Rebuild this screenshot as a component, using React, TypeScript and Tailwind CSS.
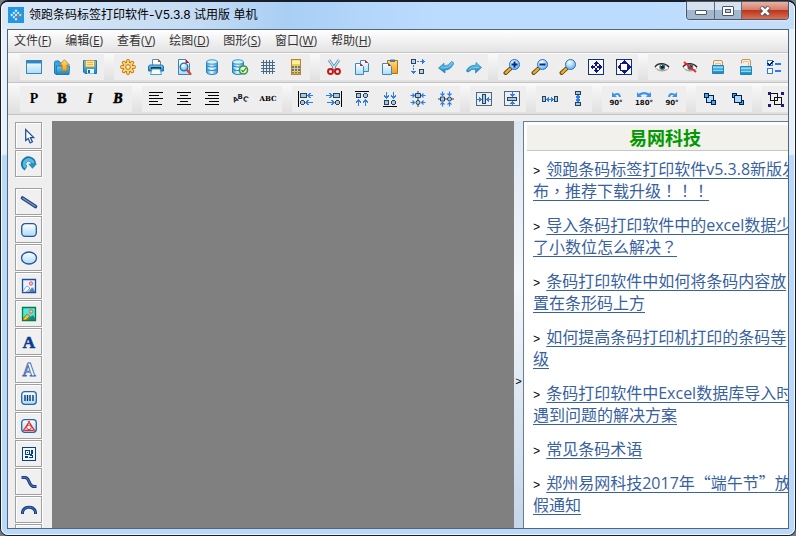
import React, { Fragment, ReactNode } from "react";

const SANS = "font-['Open_Sans','Noto_Sans_CJK_SC',sans-serif]";

function Icon({ children, crisp = false }: { children: ReactNode; crisp?: boolean }) {
  return (
    <svg
      viewBox="0 0 16 16"
      className="block h-4 w-4 shrink-0 overflow-visible"
      fill="none"
      shapeRendering={crisp ? "crispEdges" : "auto"}
      aria-hidden="true"
    >
      {children}
    </svg>
  );
}

/* ---------- shared icon parts ---------- */

function Defs() {
  return (
    <svg className="absolute h-0 w-0" aria-hidden="true">
      <defs>
        <linearGradient id="sky" x1="0" y1="0" x2="0" y2="1">
          <stop offset="0" stopColor="#ffffff" />
          <stop offset="1" stopColor="#a8dcf8" />
        </linearGradient>
        <linearGradient id="blue" x1="0" y1="0" x2="0" y2="1">
          <stop offset="0" stopColor="#6fcdf3" />
          <stop offset="1" stopColor="#1583c4" />
        </linearGradient>
        <linearGradient id="gold" x1="0" y1="0" x2="0" y2="1">
          <stop offset="0" stopColor="#ffdf73" />
          <stop offset="1" stopColor="#ee9a1c" />
        </linearGradient>
        <linearGradient id="db" x1="0" y1="0" x2="1" y2="0">
          <stop offset="0" stopColor="#2b9bd8" />
          <stop offset="0.45" stopColor="#e4f7ff" />
          <stop offset="1" stopColor="#2b8fce" />
        </linearGradient>
        <radialGradient id="lens" cx="0.4" cy="0.3" r="0.8">
          <stop offset="0" stopColor="#ffffff" />
          <stop offset="1" stopColor="#4aa9ee" />
        </radialGradient>
      </defs>
    </svg>
  );
}

function Database() {
  return (
    <>
      <path d="M2.500 3v10c0 3.300 11 3.300 11 0V3z" fill="url(#db)" stroke="#2382bd" />
      <ellipse cx="8" cy="3" rx="5.500" ry="2.200" fill="#d3f2ff" stroke="#3398d0" />
      <path d="M3 6.500c1 2 9 2 10 0M3 10c1 2 9 2 10 0" stroke="#2382bd" />
      <path d="M4 8.600c2 1.200 6 1.200 8 0" stroke="#fff" strokeWidth=".8" />
    </>
  );
}

function Lens({ children }: { children?: ReactNode }) {
  return (
    <>
      <path d="M6.500 9.500 1.500 14" stroke="#5b3d06" strokeWidth="4" strokeLinecap="round" />
      <path d="M6 10 1.800 13.800" stroke="#e9ad2b" strokeWidth="2.400" strokeLinecap="round" />
      <circle cx="10.500" cy="5.500" r="5" fill="url(#lens)" stroke="#2a72bd" />
      {children}
    </>
  );
}

function Eye() {
  return (
    <>
      <path d="M1 8.500C4 4 11 4 15 9c-3 3.300-10 3.500-14-.5z" fill="#fff" stroke="#888" strokeWidth=".7" />
      <path d="M1 7.800C4 3.500 11 3.500 15 8" stroke="#33251e" strokeWidth="1.300" />
      <circle cx="8.300" cy="8" r="3" fill="#3f7284" />
      <circle cx="8.300" cy="8" r="1.600" fill="#061821" />
      <path d="M6.800 6h1v1h-1z" fill="#fff" />
      <path d="M3 10.500c3 2 7 2 10 0" stroke="#b58c7e" strokeWidth=".8" />
    </>
  );
}

function Padlock({ open = false }: { open?: boolean }) {
  return open ? (
    <>
      <path d="M3.500 4.500V2Q3.500.500 5 .500h6q1.500 0 1.500 1.500v5.500" stroke="#d39343" />
      <path d="M5.500 4V2.500h5v4.500" stroke="#e8c08a" />
      <path d="M2.500 7.500h11v8h-11z" fill="url(#blue)" stroke="#2681b5" />
      <path d="M3 9.500h10M3 12.500h10" stroke="#8bdcf5" />
    </>
  ) : (
    <>
      <path d="M3.500 6.500V3Q3.500 1.500 5 1.500h6q1.500 0 1.500 1.500v3.500" stroke="#d39343" />
      <path d="M5.500 6.500V4.500h5v2" stroke="#e8c08a" />
      <path d="M2.500 6.500h11v8h-11z" fill="url(#blue)" stroke="#2681b5" />
      <path d="M3 8.500h10M3 11.500h10" stroke="#8bdcf5" />
    </>
  );
}

const shape = { fill: "#a9c7dd", stroke: "#26415c" };

function Arrow({ d }: { d: string }) {
  return <path d={d} stroke="#2b7df0" strokeWidth="1.100" />;
}

function Picture({ color }: { color: boolean }) {
  return (
    <>
      <path d="M1.500 1.500h13v13h-13z" fill={color ? "#49ecd9" : "#e6f3ff"} stroke={color ? "#087a43" : "#1d4da0"} strokeWidth="1.300" />
      <path d="M2 12l4-4 4 3 2-2 2 3v2H2z" fill={color ? "#2a9b58" : "#a9c4de"} />
      <path d="M2 13 6 8l3 2-4 4H2z" fill={color ? "#f0c22b" : "#fff"} stroke={color ? "#776a21" : "#5c83b7"} strokeWidth=".6" />
      <path d="M8 14 11 9.500l3 4v.5z" fill={color ? "#24798d" : "#537eae"} />
      <circle cx="10" cy="5.500" r="1.700" fill="#ffc4c4" stroke="#ee5260" />
    </>
  );
}

function TurnLabel({ text }: { text: string }) {
  return (
    <text x="8" y="14" textAnchor="middle" fontSize="7" fontWeight="700" fontFamily="DejaVu Sans, sans-serif" fill="#111">
      {text}
    </text>
  );
}

function SerifLetter({ text, italic = false }: { text: string; italic?: boolean }) {
  return (
    <text
      x="8"
      y="12"
      textAnchor="middle"
      fontSize="14"
      fontWeight="700"
      fontStyle={italic ? "italic" : "normal"}
      fontFamily="Liberation Serif, serif"
      fill="#000"
    >
      {text}
    </text>
  );
}

type Tool = [label: string, icon: ReactNode];

/* ---------- first toolbar ---------- */

const mainTools: Tool[][] = [
  [
    ["新建", <Icon crisp><path d="M.5 1.500h15v13H.5z" fill="url(#sky)" stroke="#3c86b5" /><path d="M1 2h14v2H1z" fill="#2c86c8" /><path d="M1 4h14v1H1z" fill="#90c8ec" /></Icon>],
    ["打开", <Icon><path d="M.5 3.500Q.5 2 2 2h3l1 2h6v11H2Q.5 15 .5 14z" fill="#3da5dc" stroke="#1c7db5" /><path d="M2.500 7h13L15 15.500H2z" fill="url(#blue)" stroke="#1c7db5" /><path d="M10.500.700 15.500 6H13v6H8V6H5.500z" fill="url(#gold)" stroke="#b26f10" strokeWidth=".7" /></Icon>],
    ["保存", <Icon><path d="M1.500 1.500h13v13H3l-1.500-1.500z" fill="url(#blue)" stroke="#1d79b2" /><path d="M3.500 1.500h9V8h-9z" fill="#ffe9a6" stroke="#d89931" /><path d="M5 3.500h6M5 5.500h6" stroke="#eeb54b" /><path d="M5 10h7v4.500H5z" fill="#e8f8ff" /><path d="M6 11h2v3H6z" fill="#17699d" /></Icon>],
  ],
  [
    ["设置", <Icon><path d="M8 2v12M2 8h12M3.700 3.700l8.600 8.600M12.300 3.700l-8.600 8.600" stroke="#c67a15" strokeWidth="3.800" strokeLinecap="round" /><circle cx="8" cy="8" r="5" fill="#ffcd61" stroke="#c67a15" strokeWidth="1.400" /><path d="M8 2v12M2 8h12M3.700 3.700l8.600 8.600M12.300 3.700l-8.600 8.600" stroke="#ffd376" strokeWidth="2" strokeLinecap="round" /><circle cx="8" cy="8" r="4.200" fill="#ffd376" /><circle cx="8" cy="8" r="2.300" fill="#f3f1e8" stroke="#b86e13" /></Icon>],
    ["打印", <Icon><path d="M4.500 6V.500h6l2 2V6" fill="#fff" stroke="#5194bb" /><path d="M10 0l3 3h-3z" fill="#bd4943" /><path d="M.5 8Q.5 6 2.500 6h11q2 0 2 2v4H.5z" fill="url(#blue)" stroke="#246eaa" /><path d="M3 8h10v2H3z" fill="#19384d" /><path d="M4 10h8l1.500 5.500h-11z" fill="#f5fcff" stroke="#4c9dc8" /></Icon>],
    ["打印预览", <Icon><path d="M2.500.500h7l4 4v11h-11z" fill="url(#sky)" stroke="#3684b8" /><path d="M9.500 0l4 4h-4z" fill="#c62020" /><circle cx="8" cy="8" r="3.800" fill="url(#lens)" stroke="#226fae" strokeWidth="1.300" /><path d="m11 11 3.500 4" stroke="#dd3f22" strokeWidth="2.200" strokeLinecap="round" /></Icon>],
    ["数据库", <Icon><Database /></Icon>],
    ["数据库连接", <Icon><g transform="translate(-2 0)"><Database /></g><circle cx="11.500" cy="11" r="4" fill="#eaffdf" stroke="#3d9841" strokeWidth="1.600" /><path d="m9.500 11 1.500 1.800 3-3.600" stroke="#2b9034" strokeWidth="1.300" /></Icon>],
    ["网格", <Icon crisp><path d="M3.500 1v14M6.500 1v14M9.500 1v14M12.500 1v14M1 3.500h14M1 6.500h14M1 9.500h14M1 12.500h14" stroke="#426a8a" /></Icon>],
    ["计算器", <Icon crisp><path d="M3.500.500h9v15h-9z" fill="url(#gold)" stroke="#b98432" /><path d="M4 2h8v3H4z" fill="#fff2a1" /><path d="M4 7h8v7H4z" fill="#4282a3" /><path d="M6.500 7v7M9.500 7v7M4 9.500h8M4 12h8" stroke="#f0c56a" /></Icon>],
  ],
  [
    ["剪切", <Icon><path d="m3 1 7 10M13 1 6 11" stroke="#4a87a8" strokeWidth="2.600" /><path d="m3 1 7 10M13 1 6 11" stroke="#d9f1fb" strokeWidth="1.200" /><circle cx="4.500" cy="12.500" r="2.500" stroke="#c91613" strokeWidth="1.900" /><circle cx="11.500" cy="12.500" r="2.500" stroke="#c91613" strokeWidth="1.900" /></Icon>],
    ["复制", <Icon><path d="M6.500 1.500h5l3 3v8h-8z" fill="url(#sky)" stroke="#4189b8" /><path d="M11 1l3 3h-3z" fill="#c52828" /><path d="M1.500 4.500h5l3 3v8h-8z" fill="url(#sky)" stroke="#4189b8" /><path d="M6 4l3 3H6z" fill="#c52828" /></Icon>],
    ["粘贴", <Icon><path d="M5.500 1.500h10v13h-10z" fill="url(#gold)" stroke="#ae711c" /><path d="M8 .500h5V3H8z" fill="#497da0" /><path d="M.5 4.500h6l3 3v8h-9z" fill="url(#sky)" stroke="#4189b8" /><path d="M6 4l3 3H6z" fill="#c52828" /></Icon>],
    ["连接", <Icon crisp><path d="M1.500.500h4v4h-4zM9.500 10.500h4v4h-4z" fill="#b9d2e5" stroke="#28445f" /><path d="M7 2.500h5M3.500 6v6" stroke="#2b7df0" strokeDasharray="2 1" /><path d="M12 0v5h1V4h1V3h1V2h-1V1h-1V0zM1 12h5v1H5v1H4v1H3v-1H2v-1H1z" fill="#2b7df0" /></Icon>],
    ["撤销", <Icon><path d="M.5 9 6 4.200V7q4.500 0 7.500-4.500Q16 3 15.500 5 12.500 11 7 11v3z" fill="url(#blue)" stroke="#2b80b3" strokeWidth=".7" /><path d="M3 8.800h4Q11 8.500 13.500 5" stroke="#7ccbf0" /></Icon>],
    ["重做", <Icon><path d="M15.500 8.500 10 3.500v2.700Q3 6 .5 11.500 1 14 3 12.500 5 9.800 9.500 10.200V14z" fill="url(#blue)" stroke="#2b80b3" strokeWidth=".7" /><path d="M13 8.500H9Q5 8.500 2.500 11" stroke="#7ccbf0" /></Icon>],
  ],
  [
    ["放大", <Icon><Lens><path d="M10.500 2.500v6M7.500 5.500h6" stroke="#06288f" strokeWidth="2" /></Lens></Icon>],
    ["缩小", <Icon><Lens><path d="M7.500 5.500h6" stroke="#06288f" strokeWidth="2" /></Lens></Icon>],
    ["缩放", <Icon><Lens /></Icon>],
    ["适合页面", <Icon crisp><path d="M.5.500h15v15H.5z" fill="#f6faff" stroke="#13327c" /><path d="M8 2l3 3H5zM8 14l3-3H5zM2 8l3-3v6zM14 8l-3-3v6z" fill="#13138a" /><path d="M7 4v3h2V4zM7 9v3h2V9zM4 7v2h3V7zM9 7v2h3V7z" fill="#13138a" /><path d="M7 7h2v2H7z" fill="#f6faff" /></Icon>],
    ["适合对象", <Icon crisp><path d="M.5.500h15v15H.5z" fill="#f6faff" stroke="#13327c" /><path d="M8 1l3 3H5zM8 15l3-3H5zM1 8l3-3v6zM15 8l-3-3v6z" fill="#13138a" /><path d="M4.500 4.500h7v7h-7z" fill="#fff" stroke="#13138a" /></Icon>],
  ],
  [
    ["显示", <Icon><Eye /></Icon>],
    ["隐藏", <Icon><Eye /><path d="m2 3 12 10" stroke="#ef2424" strokeWidth="1.700" /></Icon>],
    ["锁定", <Icon><Padlock /></Icon>],
    ["解锁", <Icon><Padlock open /></Icon>],
    ["属性列表", <Icon crisp><path d="M1.500 1.500h5v5h-5zM1.500 9.500h5v5h-5z" fill="#fff" stroke="#277bf2" /><path d="m2 4 1.500 2L7 2" stroke="#071f55" strokeWidth="1.500" /><path d="M9 4.500h6M9 12h6" stroke="#277bf2" strokeWidth="2" /></Icon>],
  ],
];

/* ---------- second toolbar ---------- */

const layoutTools: Tool[][] = [
  [
    ["常规", <Icon><SerifLetter text="P" /></Icon>],
    ["加粗", <Icon><g stroke="#000" strokeWidth=".6"><SerifLetter text="B" /></g></Icon>],
    ["倾斜", <Icon><SerifLetter text="I" italic /></Icon>],
    ["粗斜体", <Icon><g stroke="#000" strokeWidth=".6"><SerifLetter text="B" italic /></g></Icon>],
  ],
  [
    ["左对齐", <Icon crisp><path d="M1 1.500h14M1 4.500h10M1 7.500h14M1 10.500h9M1 13.500h13" stroke="#000" /></Icon>],
    ["居中", <Icon crisp><path d="M1 1.500h14M4 4.500h8M1 7.500h14M4 10.500h8M1 13.500h14" stroke="#000" /></Icon>],
    ["右对齐", <Icon crisp><path d="M1 1.500h14M4 4.500h11M1 7.500h14M5 10.500h10M1 13.500h14" stroke="#000" /></Icon>],
    ["弧形文字", <Icon><g fontFamily="DejaVu Sans, sans-serif" fontSize="7" fontWeight="700" fill="#1b2430"><text x="1" y="11" transform="rotate(-25 3 9)">A</text><text x="5.500" y="8">B</text><text x="11" y="10" transform="rotate(25 13 8)">C</text></g></Icon>],
    ["文字", <Icon><text x="8" y="10" textAnchor="middle" fontSize="7" fontWeight="700" fontFamily="DejaVu Serif, serif" fill="#000">ABC</text></Icon>],
  ],
  [
    ["左边对齐", <Icon crisp><path d="M.5 0v16" stroke="#000" /><path d="M2.500 2.500h6v4h-6z" {...shape} /><circle cx="4.500" cy="11.500" r="2" {...shape} /><Arrow d="M10 4.500h5M12.500 2 10 4.500 12.500 7M8 11.500h7M10.500 9 8 11.500 10.500 14" /></Icon>],
    ["右边对齐", <Icon crisp><path d="M15.500 0v16" stroke="#000" /><path d="M7.500 2.500h6v4h-6z" {...shape} /><circle cx="11.500" cy="11.500" r="2" {...shape} /><Arrow d="M0 4.500h6M3.500 2 6 4.500 3.500 7M1 11.500h7M5.500 9 8 11.500 5.500 14" /></Icon>],
    ["顶部对齐", <Icon crisp><path d="M1 .500h14" stroke="#000" /><path d="M2.500 2.500h4v4h-4z" {...shape} /><circle cx="11.500" cy="4.500" r="2" {...shape} /><Arrow d="M4.500 9v6M2 11.500 4.500 9 7 11.500M11.500 9v6M9 11.500 11.500 9l2.500 2.500" /></Icon>],
    ["底部对齐", <Icon crisp><path d="M1 15.500h14" stroke="#000" /><path d="M2.500 9.500h4v4h-4z" {...shape} /><circle cx="11.500" cy="11.500" r="2" {...shape} /><Arrow d="M4.500 1v6M2 4.500 4.500 7 7 4.500M11.500 1v6M9 4.500 11.500 7 14 4.500" /></Icon>],
    ["垂直居中", <Icon><path d="M8 0v16" stroke="#26415c" /><path d="M5.500 2.500h5v4h-5z" {...shape} /><circle cx="8" cy="11.500" r="2" {...shape} /><Arrow d="M.500 4.500h4M2.500 2.500l2 2-2 2M15.500 4.500h-4M13.500 2.500l-2 2 2 2M.500 11.500h4M2.500 9.500l2 2-2 2M15.500 11.500h-4M13.500 9.500l-2 2 2 2" /></Icon>],
    ["水平居中", <Icon><path d="M0 8h16" stroke="#26415c" /><path d="M2.500 6h4v4h-4z" {...shape} /><circle cx="11.500" cy="8" r="2" {...shape} /><Arrow d="M4.500 .500v4M2.500 2.500l2 2 2-2M11.500 .500v4M9.500 2.500l2 2 2-2M4.500 15.500v-4M2.500 13.500l2-2 2 2M11.500 15.500v-4M9.500 13.500l2-2 2 2" /></Icon>],
  ],
  [
    ["页面水平居中", <Icon crisp><path d="M.5 1.500h15v13H.5z" stroke="#4d6787" /><path d="M6.500 3.500h3v9h-3z" {...shape} /><Arrow d="M1 8.500h4M3 6.500l2 2-2 2M15 8.500h-4M13 6.500l-2 2 2 2" /></Icon>],
    ["页面垂直居中", <Icon crisp><path d="M.5.500h15v14H.5z" stroke="#4d6787" /><path d="M3.500 6.500h9v3h-9z" {...shape} /><Arrow d="M8.500 1v4M6.500 3l2 2 2-2M8.500 14v-3M6.500 13l2-2 2 2" /></Icon>],
  ],
  [
    ["水平等距", <Icon crisp><path d="M.5 5.500h3v5h-3zM12.500 5.500h3v5h-3z" {...shape} /><Arrow d="M5 8.500h6M7 6.500l-2 2 2 2M9 6.500l2 2-2 2" /></Icon>],
    ["垂直等距", <Icon crisp><path d="M5.500.500h5v3h-5zM5.500 11.500h5v3h-5z" {...shape} /><Arrow d="M8 4.500v6M6 6.500l2-2 2 2M6 8.500l2 2 2-2" /></Icon>],
  ],
  [
    ["逆时针旋转90度", <Icon><path d="M4 1v5h5L7.400 4.400Q10 2.800 11 6h2Q12 0 6 3z" fill="#3a92ef" /><TurnLabel text="90°" /></Icon>],
    ["旋转180度", <Icon><path d="M1 1v5h5L4.400 4.400Q8 2 11.500 4.300L10 6h5V1l-1.600 1.600Q8-.500 2.700 2.700z" fill="#3a92ef" /><TurnLabel text="180°" /></Icon>],
    ["顺时针旋转90度", <Icon><path d="M13 1v5H8l1.600-1.600Q7 2.800 6 6H4Q5 0 11 3z" fill="#3a92ef" /><TurnLabel text="90°" /></Icon>],
  ],
  [
    ["置于顶层", <Icon crisp><path d="M4.500 4.500h7v7h-7z" fill="#a6dbff" stroke="#071f45" /><path d="M2.500 2.500h4v4h-4zM9.500 9.500h4v4h-4z" fill="#49a4f2" stroke="#071f45" /></Icon>],
    ["置于底层", <Icon crisp><path d="M2.500 2.500h4v4h-4zM9.500 9.500h4v4h-4z" fill="#49a4f2" stroke="#071f45" /><path d="M4.500 4.500h7v7h-7z" fill="#a6dbff" stroke="#071f45" /></Icon>],
  ],
  [
    ["组合", <Icon crisp><path d="M2.500 2.500h7v7h-7z" fill="#eee" stroke="#111" /><path d="M6.500 6.500h7v7h-7z" stroke="#111" /><path d="M0 1h3v3H0zM13 1h3v3h-3zM0 13h3v3H0zM13 13h3v3h-3z" fill="#2b147c" /></Icon>],
  ],
];

/* ---------- drawing tools ---------- */

const sideTools: Tool[] = [
  ["选择", <Icon><path d="M4.700 1.500v11l2.500-2 2 4.300 2.200-1-2-4.200h3.300z" fill="#fff" stroke="#27519c" strokeWidth="1.300" /></Icon>],
  ["旋转", <Icon><path d="M5 12.300A5 5 0 1 1 12.500 8" stroke="#1676a8" strokeWidth="5.200" /><path d="M4.500 11.500A4.600 4.600 0 1 1 12.300 7.500" stroke="#54bce2" strokeWidth="3" /><path d="M7 7.800h9l-4.500 5z" fill="#248fc1" /></Icon>],
  ["直线", <Icon><path d="m1.500 4 13 8.500" stroke="#26498c" strokeWidth="3.600" strokeLinecap="round" /><path d="m1.500 4 13 8.500" stroke="#8298bd" strokeWidth="1.200" /></Icon>],
  ["圆角矩形", <Icon><rect x=".7" y="1.700" width="14.600" height="12.600" rx="3.500" fill="url(#sky)" stroke="#2554a0" strokeWidth="1.300" /></Icon>],
  ["椭圆", <Icon><ellipse cx="8" cy="8" rx="7.500" ry="6" fill="url(#sky)" stroke="#2554a0" strokeWidth="1.300" /></Icon>],
  ["图片", <Icon><Picture color={false} /></Icon>],
  ["彩色图片", <Icon><Picture color /></Icon>],
  ["文本", <Icon><text x="8" y="14" textAnchor="middle" fontSize="17" fontWeight="700" fontFamily="Liberation Serif, serif" fill="#0b3d91" stroke="#0b3d91" strokeWidth=".6">A</text></Icon>],
  ["空心文本", <Icon><text x="8" y="14" textAnchor="middle" fontSize="18" fontWeight="700" fontFamily="Liberation Serif, serif" fill="#fff" stroke="#3d68b0" strokeWidth=".9">A</text></Icon>],
  ["条形码", <Icon><rect x=".7" y="1.700" width="14.600" height="12.600" rx="3" fill="url(#sky)" stroke="#2665ad" strokeWidth="1.300" /><path d="M4 5v6M6.500 5v6M9 5v6M12 5v6" stroke="#08377d" strokeWidth="1.400" /></Icon>],
  ["图形", <Icon><rect x=".7" y="1.700" width="14.600" height="12.600" rx="3" fill="url(#sky)" stroke="#2665ad" strokeWidth="1.300" /><path d="M8 4 2.700 12.300h10.600z" fill="#fff" stroke="#e62626" strokeWidth="1.300" /><circle cx="8" cy="9.300" r="2.300" fill="#fff" stroke="#e62626" /><path d="M7 3h2v2H7zM2 11h2v2H2zM12 11h2v2h-2z" fill="#f04b4b" /></Icon>],
  ["二维码", <Icon crisp><path d="M1.500 1.500h13v13h-13z" fill="#edf8ff" stroke="#0b3d87" /><path d="M4.500 4.500h4v4h-4z" stroke="#0b3d87" /><path d="M6 6h1v1H6zM10 4h2v4h-2zM9 8h2v2H9zM4 10h3v2H4zM8 11h4v1H8zM11 9h1v3h-1z" fill="#0b3d87" /></Icon>],
  ["曲线", <Icon><path d="M.5 3.500H4Q6.500 3.500 8 7.500T12 12.500h3.500" stroke="#173f88" strokeWidth="3" /><path d="M1 3.500H4Q6.500 3.500 8 7.500T12 12.500h3" stroke="#5d84ba" strokeWidth=".8" /></Icon>],
  ["弧线", <Icon><path d="M1.500 12V10C3 3.500 13 3.500 14.500 10v2" stroke="#173f88" strokeWidth="3" /><path d="M1.500 11.500V10C3 3.500 13 3.500 14.500 10v1.500" stroke="#5d84ba" strokeWidth=".8" /></Icon>],
  ["多边形", <Icon><path d="M2 5h12l-3 8H5z" stroke="#173f88" /></Icon>],
];

const menus: [string, string][] = [
  ["文件", "F"],
  ["编辑", "E"],
  ["查看", "V"],
  ["绘图", "D"],
  ["图形", "S"],
  ["窗口", "W"],
  ["帮助", "H"],
];

const news: string[][] = [
  ["领跑条码标签打印软件v5.3.8新版发", "布，推荐下载升级！！！"],
  ["导入条码打印软件中的excel数据少", "了小数位怎么解决？"],
  ["条码打印软件中如何将条码内容放", "置在条形码上方"],
  ["如何提高条码打印机打印的条码等", "级"],
  ["条码打印软件中Excel数据库导入时", "遇到问题的解决方案"],
  ["常见条码术语"],
  ["郑州易网科技2017年“端午节”放", "假通知"],
];

/* Full-width punctuation sits in the middle of its cell. */
function Cjk({ text }: { text: string }) {
  return (
    <>
      {text.split(/([，！？“”])/).map((part, i) =>
        i % 2 ? (
          <span key={i} lang="zh-TW" className="font-['Noto_Sans_CJK_TC',sans-serif] leading-none">
            {part}
          </span>
        ) : (
          part
        ),
      )}
    </>
  );
}

function Toolbar({ groups, label, className }: { groups: Tool[][]; label: string; className: string }) {
  return (
    <div
      role="toolbar"
      aria-label={label}
      className={`flex shrink-0 gap-[10px] overflow-hidden border-b border-[#c4c4c4] bg-linear-to-b from-[#fafafa] to-[#dfdfdf] pl-3 ${className}`}
    >
      {groups.map((group, i) => (
        <div key={i} className="flex h-[26px] shrink-0 bg-[#eeeeee]">
          {group.map(([name, icon]) => (
            <button key={name} type="button" aria-label={name} className="flex h-[26px] w-7 items-center justify-center">
              {icon}
            </button>
          ))}
        </div>
      ))}
    </div>
  );
}

function SideButton({ tool }: { tool: Tool }) {
  return (
    <button
      type="button"
      aria-label={tool[0]}
      className="flex h-[27px] w-[27px] shrink-0 items-center justify-center border border-[#a0a0a0] bg-[#f0f0f0] shadow-[1px_1px_0_#ffffff,inset_1px_1px_0_#ffffff]"
    >
      {tool[1]}
    </button>
  );
}

function TitleBar() {
  return (
    <header className="flex h-[27px] shrink-0 items-start justify-between">
      <div className="flex items-center gap-[5px] pt-[3px] pl-px">
        <svg viewBox="0 0 16 16" className="h-4 w-4" aria-hidden="true">
          <path d="M0 0h16v16H0z" fill="#2496e6" />
          <g transform="rotate(45 8 8)">
            <path d="M4 4h2v2H4zM7 4h2v2H7zM4 7h2v2H4zM7 7h2v2H7zM4 10h2v2H4zM7 10h2v2H7zM10 10h2v2h-2z" fill="#d9f1ff" />
            <path d="M10 4h2v2h-2z" fill="#ffe13d" />
            <path d="M10 7h2v2h-2z" fill="#f25c3b" />
          </g>
        </svg>
        <h1 className="font-[Inter,'Noto_Sans_CJK_SC',sans-serif] text-xs leading-5 text-black">
          领跑条码标签打印软件-V5.3.8 试用版 单机
        </h1>
      </div>
      <div className="flex h-[18px] overflow-hidden rounded-b border border-t-0 border-[#4a5768] shadow-[0_0_2px_#ffffff]">
        <button
          type="button"
          aria-label="最小化"
          className="flex w-7 items-center justify-center border-r border-[#5c6c80] bg-linear-to-b from-[#d5e2f0] from-45% to-[#a3b8cf] to-50%"
        >
          <span className="mt-1 h-[5px] w-3 rounded-[1px] border border-[#4d5666] bg-white" />
        </button>
        <button
          type="button"
          aria-label="最大化"
          className="flex w-[27px] items-center justify-center border-r border-[#5c6c80] bg-linear-to-b from-[#d5e2f0] from-45% to-[#a3b8cf] to-50%"
        >
          <span className="flex h-[10px] w-3 items-center justify-center rounded-[1px] border border-[#4d5666] bg-white">
            <span className="h-1 w-[6px] border border-[#4d5666] bg-[#c0d0e2]" />
          </span>
        </button>
        <button
          type="button"
          aria-label="关闭"
          className="flex w-[46px] items-center justify-center bg-[linear-gradient(to_bottom,#e8b3a6,#d57d69_45%,#b9371c_50%,#d9705a)]"
        >
          <svg viewBox="0 0 12 10" className="h-[10px] w-3" aria-hidden="true">
            <path d="m2 1 8 8M10 1 2 9" stroke="#54525c" strokeWidth="4.400" />
            <path d="m2.300 1.300 7.400 7.400M9.700 1.300 2.300 8.700" stroke="#fff" strokeWidth="2.600" />
          </svg>
        </button>
      </div>
    </header>
  );
}

export default function App() {
  return (
    <div className={`h-screen overflow-hidden bg-[#747d86] ${SANS}`}>
      <Defs />
      <div className="flex h-full flex-col rounded-lg border border-t-2 border-[#171d28] bg-linear-to-b from-[#e6f0fa] from-[152px] to-[#b9d9fa] to-[154px]">
        <div className="flex min-h-0 flex-1 flex-col rounded-[7px] border border-t-0 border-white/80 bg-[linear-gradient(to_right,#dbe8f6,#c3dbf3_25%,#a9cff4_36%,#bcdcff_55%,#bcdcff_82%,#c5def7)] bg-size-[100%_27px] bg-no-repeat px-[5px] pb-[5px]">
          <TitleBar />
          <div className="flex min-h-0 flex-1 flex-col overflow-hidden border border-[#536579] bg-[#eeeeee]">
            <nav
              aria-label="主菜单"
              className="flex h-[23px] shrink-0 items-center gap-[14px] border-b border-[#c4c4c4] bg-linear-to-b from-white to-[#e3e3e3] pl-[6px]"
            >
              {menus.map(([name, key]) => (
                <button key={key} type="button" className="text-xs leading-5 text-[#333333]">
                  {name}(<u>{key}</u>)
                </button>
              ))}
            </nav>
            <Toolbar label="标准" groups={mainTools} className="h-[30px] pt-px" />
            <Toolbar label="排列" groups={layoutTools} className="h-8 pt-[3px]" />

            <main className="flex min-h-0 flex-1 pt-[6px]">
              <div role="toolbar" aria-label="绘图工具" className="flex w-11 shrink-0 flex-col gap-px overflow-hidden pt-px pl-[7px]">
                {sideTools.map((tool, i) => (
                  <Fragment key={tool[0]}>
                    {i === 2 && <div className="h-[9px] shrink-0" />}
                    <SideButton tool={tool} />
                  </Fragment>
                ))}
              </div>

              <section aria-label="画布" className="min-w-0 flex-1 bg-[#808080]" />

              <button
                type="button"
                aria-label="折叠面板"
                className="flex w-[9px] shrink-0 items-center justify-center bg-linear-to-b from-[#dde7f2] via-[#f4f7fb] via-40% to-[#c5d6e9] pt-29 font-['Liberation_Mono',monospace] text-[11px] text-black"
              >
                &gt;
              </button>

              <aside className="w-[265px] shrink-0 overflow-hidden border-t border-l border-[#6b7d92] bg-white pt-[3px] pl-[3px]">
                <div className="w-[276px]">
                  <h2 className="flex h-[26px] items-center justify-center border-b border-[#c6c6c6] bg-[#f2f1ec] text-lg leading-6 font-bold text-[#009900]">
                    易网科技
                  </h2>
                  <ul className="flex flex-col gap-3 pt-[7px] pl-[6px]">
                    {news.map((lines) => (
                      <li key={lines[0]} className="text-base leading-[22px] whitespace-nowrap">
                        <span className="mr-[6px] font-['Liberation_Mono',monospace] text-xs leading-none text-black">
                          &gt;
                        </span>
                        <a href="#" className="text-[#38619f] underline decoration-1 underline-offset-[3px]">
                          {lines.map((line, i) => (
                            <Fragment key={line}>
                              {i > 0 && <br />}
                              <Cjk text={line} />
                            </Fragment>
                          ))}
                        </a>
                      </li>
                    ))}
                  </ul>
                </div>
              </aside>
            </main>
          </div>
        </div>
      </div>
    </div>
  );
}
